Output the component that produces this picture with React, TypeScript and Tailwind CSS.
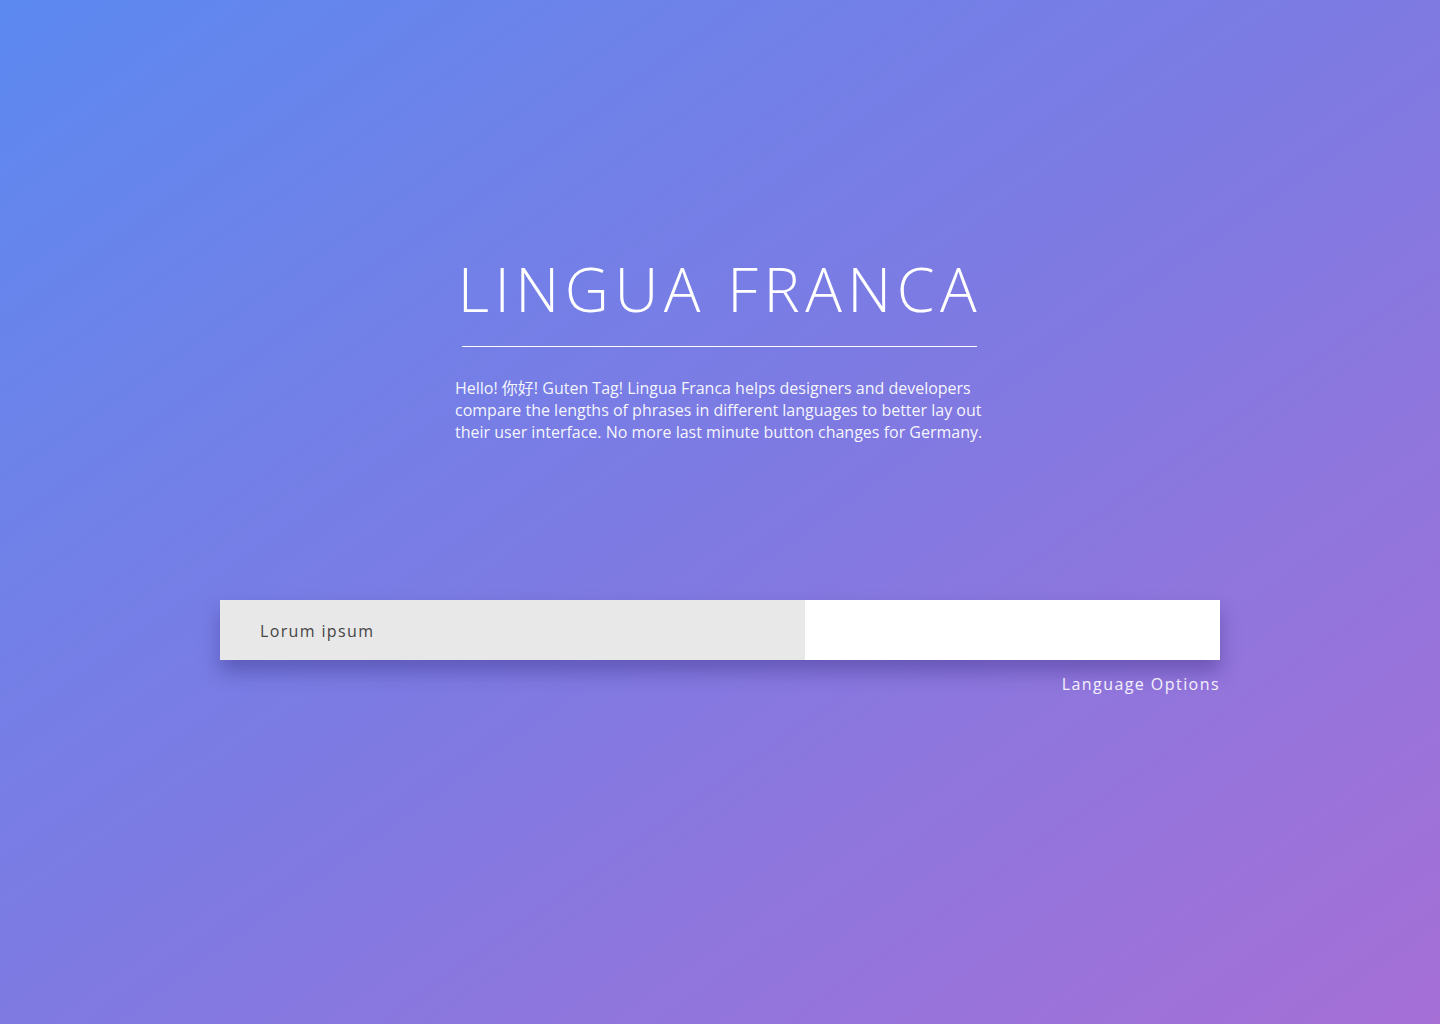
import React from 'react';

const font = { fontFamily: '"Open Sans", "Noto Sans CJK SC", sans-serif' };

export default function App() {
  return (
    <div
      className="min-h-screen w-full bg-linear-to-br from-[#5b89f0] via-[#7e7ae2] to-[#a56fd6] text-white"
      style={font}
    >
      <div className="flex flex-col items-center pt-[250px]">
        <div className="flex flex-col items-center w-[530px]">
          <h1 className="whitespace-nowrap text-[61px] font-light leading-[78px] tracking-[0.09em]">
            LINGUA FRANCA
          </h1>
          <div className="mt-[18px] h-px w-[515px] bg-white -ml-[2px]" />
          <p className="mt-[30px] w-[530px] text-[16px] leading-[22px] text-white/95">
            Hello! 你好! Guten Tag! Lingua Franca helps designers and developers compare the lengths of phrases in different languages to better lay out their user interface. No more last minute button changes for Germany.
          </p>
        </div>

        <div className="mt-[157px] w-[1000px]">
          <div className="flex h-[60px] shadow-[0_12px_20px_rgba(40,30,110,0.35)]">
            <div className="flex w-[585px] items-center bg-[#e8e8e8] pl-10 pt-[2px] text-[16px] tracking-[0.085em] text-[#444]">
              Lorum ipsum
            </div>
            <div className="flex-1 bg-white" />
          </div>
          <div className="mt-[12px] text-right text-[16px] tracking-[0.09em] text-white/90">
            Language Options
          </div>
        </div>
      </div>
    </div>
  );
}
